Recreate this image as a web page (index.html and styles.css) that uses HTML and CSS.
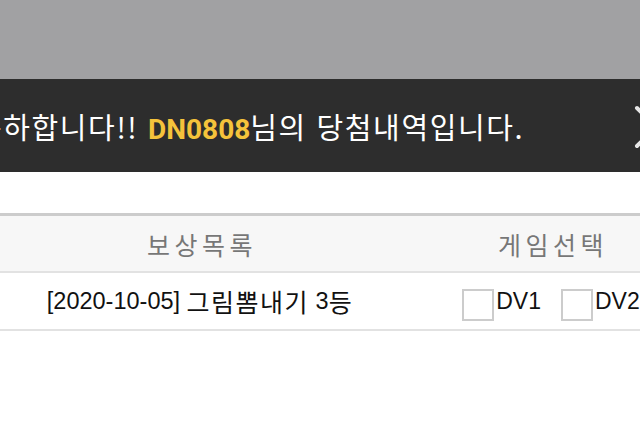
FILE: index.html
```html
<!DOCTYPE html>
<html lang="ko">
<head>
  <meta charset="UTF-8">
  <title>당첨내역</title>
  <link rel="stylesheet" href="styles.css">
</head>
<body>

  <div class="dim"></div>

  <div class="popup">
    <div class="popup-head">
      <p class="title">축하합니다!! <b class="nick">DN0808</b>님의 당첨내역입니다.</p>
      <button class="close" aria-label="닫기">
        <svg width="44" height="44" viewBox="0 0 44 44">
          <path d="M3 3 L41 41 M41 3 L3 41" stroke="#e6e6e6" stroke-width="4" stroke-linecap="round" fill="none"/>
        </svg>
      </button>
    </div>

    <div class="popup-body">
      <div class="reward-table">
        <div class="row head">
          <div class="cell">보상목록</div>
          <div class="cell">게임선택</div>
        </div>
        <div class="row">
          <div class="cell item">[2020-10-05] <span class="ko">그림뽐내기</span> 3<span class="ko">등</span></div>
          <div class="cell games">
            <label class="check"><span class="box"></span>DV1</label>
            <label class="check"><span class="box"></span>DV2</label>
          </div>
        </div>
      </div>
    </div>
  </div>

</body>
</html>
```

FILE: styles.css
```css
html, body {
  margin: 0;
  height: 100%;
  overflow: hidden;
}

body {
  width: 640px;
  background-color: #ffffff;
  font-family: "Noto Sans CJK KR", "Noto Sans", sans-serif;
}

.dim {
  height: 79px;
  background-color: #a1a1a3;
}

.popup {
  width: 702px;
}

.popup-head {
  position: relative;
  height: 93px;
  background-color: #2d2d2d;
  display: flex;
  align-items: center;
}

.title {
  margin: 0 0 0 -25px;
  color: #ffffff;
  font-size: 29px;
  white-space: nowrap;
  letter-spacing: 1.6px;
}

.nick {
  color: #f5c33b;
  font-family: Roboto, "Liberation Sans", sans-serif;
  font-size: 28px;
  font-weight: 700;
  letter-spacing: 0;
}

/* close button sits over the header's right end */
.close {
  position: absolute;
  left: 634px;
  top: 26px;
  padding: 0;
  border: none;
  background: none;
  display: flex;
}

.popup-body {
  padding-top: 41px;
}

.reward-table {
  border-top: 3px solid #cccccc;
}

.row {
  display: grid;
  grid-template-columns: 400px 302px;
  border-bottom: 2px solid #e2e2e2;
}

.row.head {
  height: 55px;
  background-color: #f7f7f7;
  color: #777777;
  font-size: 25px;
  letter-spacing: 4.5px;
}

.row.head .cell {
  padding-left: 4px;
}

.cell {
  display: flex;
  align-items: center;
  justify-content: center;
}

.row:not(.head) {
  height: 56px;
}

.item {
  font-family: "Liberation Sans", Arial, sans-serif;
  font-size: 23.5px;
  color: #111111;
  white-space: pre;
}

.ko {
  font-family: "Noto Sans CJK KR", sans-serif;
  font-size: 25px;
  letter-spacing: 1.5px;
}

.games {
  gap: 20px;
}

.check {
  display: flex;
  align-items: center;
  font-family: "Liberation Sans", Arial, sans-serif;
  font-size: 23px;
  color: #111111;
}

.box {
  width: 28px;
  height: 28px;
  border: 2px solid #cccccc;
  margin-top: 8px;
  margin-right: 2px;
}
```
